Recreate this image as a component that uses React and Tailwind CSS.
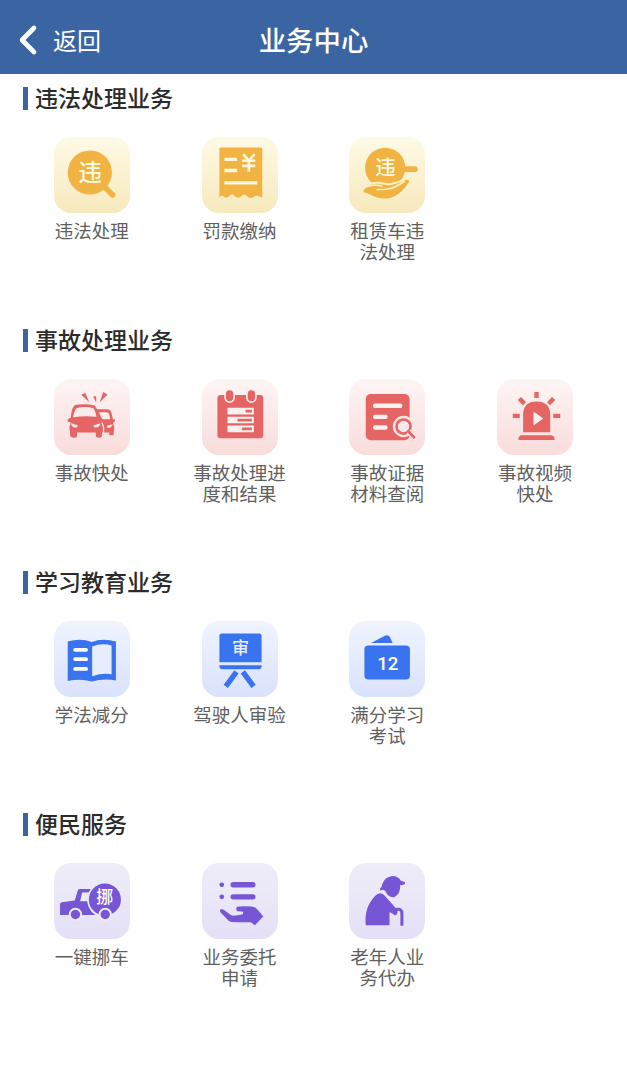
import { ChevronLeft } from 'lucide-react'

const glyph = { fontFamily: '"Noto Sans CJK SC", sans-serif', fontWeight: 500, textAnchor: 'middle' }

const ViolationIcon = () => (
  <svg viewBox="28 20 227 227" className="w-full h-full">
    <path d="M180 170 L203 193" stroke="#f1b442" strokeWidth="17" strokeLinecap="round" />
    <circle cx="135" cy="126" r="66" fill="#f1b442" />
    <text x="136" y="150" fontSize="70" fill="#fff8de" style={glyph}>违</text>
  </svg>
)

const FineIcon = () => (
  <svg viewBox="470 20 227 227" className="w-full h-full">
    <path d="M526 51 H646 Q650 51 650 55 V200 H645 Q636 190 624 200 Q614 206 604 196 Q596 188 588 196 Q578 206 568 196 Q560 188 551 196 Q542 205 533 196 Q528 192 522 202 V55 Q522 51 526 51 Z" fill="#f1b442" />
    <path d="M537 87 H575 M537 120 H575 M537 157 H635" stroke="#fff8de" strokeWidth="10" />
    <path d="M593 71 L610 91 L627 71 M590 91 H629 M590 106 H629 M610 91 V124" stroke="#fff8de" strokeWidth="8" fill="none" />
  </svg>
)

const RentalIcon = () => (
  <svg viewBox="28 20 227 227" className="w-full h-full">
    <path d="M185 116 H225" stroke="#f1b442" strokeWidth="17" strokeLinecap="round" />
    <circle cx="136" cy="112" r="60" fill="#f1b442" />
    <path d="M68 180 Q82 155 116 157 L146 161 Q165 160 199 145 Q212 142 210 155 Q187 194 152 205 Q118 211 91 195 Q80 188 70 188 Z" fill="#f1b442" stroke="#faf0c8" strokeWidth="6" />
    <path d="M112 177 L140 176 Q166 173 192 153" stroke="#faf0c8" strokeWidth="5" fill="none" strokeLinecap="round" />
    <path d="M78 169 Q98 160 126 166" stroke="#faf0c8" strokeWidth="5" fill="none" strokeLinecap="round" />
    <text x="137" y="133" fontSize="61" fill="#fff8de" style={glyph}>违</text>
  </svg>
)

const CrashIcon = () => (
  <svg viewBox="28 27 227 227" className="w-full h-full">
    <g fill="#e46563">
      <path d="M109 74 L122 69 L133 96 Z M145 80 L154 78 L154 97 Z M175 66 L188 73 L164 97 Z" />
      <path d="M152 117 H187 Q197 117 200 129 L204 147 H210 V155 L204 158 L208 171 L206 195 H193 V187 H165 V150 Z" />
    </g>
    <path d="M162 126 H185 Q191 126 193 133 L196 147 H172 Z M186 167 L203 162 Q201 173 188 173 Z" fill="#fcebeb" />
    <path d="M90 105 Q121 99 149 106 Q159 115 164 143 L173 146 V154 L167 157 L172 171 L171 199 Q162 206 153 199 V187 H97 V199 Q88 206 77 199 L74 171 L78 157 L69 154 V147 L78 143 Q80 114 90 105 Z" fill="#e46563" />
    <path d="M171 157 L176 171 V200" stroke="#fcebeb" strokeWidth="4" fill="none" />
    <path d="M95 114 Q121 108 146 114 Q153 125 155 140 Q121 136 85 141 Q88 122 95 114 Z M79 159 L98 165 Q102 172 89 172 Q80 170 79 159 Z M166 159 L147 165 Q142 172 156 172 Q165 170 166 159 Z" fill="#fcebeb" />
  </svg>
)

const ProgressIcon = () => (
  <svg viewBox="470 27 227 227" className="w-full h-full">
    <rect x="516" y="75" width="137" height="129" rx="9" fill="#e46563" />
    <g fill="#e46563" stroke="#fdeeee" strokeWidth="5">
      <rect x="539" y="58" width="27" height="38" rx="13.5" />
      <rect x="604" y="58" width="27" height="38" rx="13.5" />
    </g>
    <path d="M546 113 H625 V133 H546 Z M546 140 H625 V159 H546 Z M546 166 H625 V186 H546 Z" fill="#fdf0f0" />
    <path d="M600 123 H619 M576 150 H619 M589 176 H619" stroke="#e46563" strokeWidth="8" />
  </svg>
)

const EvidenceIcon = () => (
  <svg viewBox="28 27 227 227" className="w-full h-full">
    <rect x="78" y="72" width="131" height="138" rx="15" fill="#e46563" />
    <path d="M106 107 H181 M106 140 H137 M106 172 H137" stroke="#fdf0f0" strokeWidth="13" strokeLinecap="round" />
    <circle cx="191" cy="169" r="32" fill="#fce8e8" />
    <circle cx="191" cy="169" r="21" fill="none" stroke="#e46563" strokeWidth="8" />
    <path d="M206 184 L223 202" stroke="#fce8e8" strokeWidth="17" />
    <path d="M205 183 L222 201" stroke="#e46563" strokeWidth="8" strokeLinecap="round" />
  </svg>
)

const AlarmIcon = () => (
  <svg viewBox="470 27 227 227" className="w-full h-full">
    <path d="M588 66 V84 M537 85 L552 101 M639 85 L624 101 M517 137 H538 M638 137 H659" stroke="#e46563" strokeWidth="13" />
    <path d="M548 186 V134 Q548 94 588 94 Q629 94 629 134 V186 Z" fill="#e46563" />
    <path d="M581 128 L605 145 L581 162 Z" fill="#fdf0f0" stroke="#fdf0f0" strokeWidth="4" strokeLinejoin="round" />
    <path d="M534 209 Q534 195 544 195 H632 Q642 196 642 209 Z" fill="#e46563" />
  </svg>
)

const BookIcon = () => (
  <svg viewBox="28 32 227 227" className="w-full h-full">
    <path d="M69 93 Q108 82 141 95 Q172 82 213 93 V210 Q178 202 141 213 Q108 203 69 211 Z" fill="#3973ef" />
    <path d="M142 108 Q171 96 200 105 V191 Q171 187 142 197 Z" fill="#e7edfc" />
    <path d="M91 118 H124 M91 146 H124 M91 175 H124" stroke="#fff" strokeWidth="11" strokeLinecap="round" />
  </svg>
)

const BoardIcon = () => (
  <svg viewBox="470 32 227 227" className="w-full h-full">
    <path d="M522 155 V76 Q522 69 529 69 H641 Q648 69 648 76 V155 Z" fill="#3973ef" />
    <path d="M522 164 H648 V169 Q648 176 641 176 H529 Q522 176 522 169 Z" fill="#3973ef" />
    <path d="M573 184 L541 227 M592 184 L624 227" stroke="#3973ef" strokeWidth="16" />
    <text x="585" y="132" fontSize="51" fill="#e9efff" style={glyph}>审</text>
  </svg>
)

const ScoreIcon = () => (
  <svg viewBox="28 32 227 227" className="w-full h-full">
    <path d="M94 98 L135 76 Q145 72 151 81 L158 98 Z" fill="#3973ef" />
    <rect x="74" y="105" width="136" height="102" rx="12" fill="#3973ef" />
    <text x="144" y="178" fontSize="56" fill="#fff" textAnchor="middle" fontFamily="Roboto, sans-serif" fontWeight="500">12</text>
  </svg>
)

const MoveCarIcon = () => (
  <svg viewBox="28 24 227 227" className="w-full h-full">
    <path d="M46 146 Q47 142 52 141 L90 136 L99 106 Q100 102 107 102 H153 V179 H46 Z" fill="#7656d5" />
    <path d="M112 112 H137 L133 138 H106 Z" fill="#edeaf8" />
    <circle cx="180" cy="134" r="53" fill="#edeaf8" />
    <circle cx="180" cy="133" r="48" fill="#7656d5" />
    <g fill="#7656d5" stroke="#edeaf8" strokeWidth="6">
      <circle cx="92" cy="178" r="17" />
      <circle cx="181" cy="178" r="17" />
    </g>
    <text x="180" y="145" fontSize="51" fill="#fff" style={glyph}>挪</text>
  </svg>
)

const EntrustIcon = () => (
  <svg viewBox="25 24 227 227" className="w-full h-full">
    <g fill="#7656d5">
      <circle cx="84" cy="89" r="7" />
      <circle cx="84" cy="125" r="7" />
      <rect x="110" y="81" width="75" height="16" rx="8" />
      <rect x="110" y="117" width="75" height="16" rx="8" />
      <path d="M80 163 Q86 160 93 166 L111 179 Q116 182 125 181 L145 178 Q151 173 145 169 L131 168 Q124 162 130 155 Q137 152 173 154 L184 157 Q193 164 208 184 L183 210 L171 201 Q142 202 113 200 Q103 198 98 190 L80 171 Q77 166 80 163 Z" />
    </g>
  </svg>
)

const ElderIcon = () => (
  <svg viewBox="28 24 227 227" className="w-full h-full">
    <g fill="#7656d5">
      <path d="M121 106 Q118 101 125 96 Q130 70 149 65 Q159 60 170 65 Q180 69 183 77 L195 81 V87 Q189 91 181 90 Q182 118 163 126 Q145 128 136 107 L129 104 Z" />
      <path d="M78 210 Q72 158 105 123 Q119 108 132 119 L169 160 Q176 165 171 177 Q166 184 160 176 L149 170 V210 Z" />
    </g>
    <path d="M168 163 Q186 158 186 175 V207" stroke="#7656d5" strokeWidth="9" fill="none" strokeLinecap="square" />
  </svg>
)

const sections = [
  {
    title: '违法处理业务',
    tile: 'from-[#fefae5] to-[#f7e9bd]',
    items: [
      { lines: ['违法处理'], Icon: ViolationIcon },
      { lines: ['罚款缴纳'], Icon: FineIcon },
      { lines: ['租赁车违', '法处理'], Icon: RentalIcon },
    ],
  },
  {
    title: '事故处理业务',
    tile: 'from-[#fef5f5] to-[#f9dcdc]',
    items: [
      { lines: ['事故快处'], Icon: CrashIcon },
      { lines: ['事故处理进', '度和结果'], Icon: ProgressIcon },
      { lines: ['事故证据', '材料查阅'], Icon: EvidenceIcon },
      { lines: ['事故视频', '快处'], Icon: AlarmIcon },
    ],
  },
  {
    title: '学习教育业务',
    tile: 'from-[#eff4fe] to-[#dae2fc]',
    items: [
      { lines: ['学法减分'], Icon: BookIcon },
      { lines: ['驾驶人审验'], Icon: BoardIcon },
      { lines: ['满分学习', '考试'], Icon: ScoreIcon },
    ],
  },
  {
    title: '便民服务',
    tile: 'from-[#efedf9] to-[#e5e0f7]',
    items: [
      { lines: ['一键挪车'], Icon: MoveCarIcon },
      { lines: ['业务委托', '申请'], Icon: EntrustIcon },
      { lines: ['老年人业', '务代办'], Icon: ElderIcon },
    ],
  },
]

export default function App() {
  return (
    <div className="min-h-screen bg-white font-['Noto_Sans_CJK_SC',sans-serif]">
      <header className="h-[74px] bg-[#3b65a2] text-white grid grid-cols-3 items-center pt-1.5">
        <button className="flex items-center pl-1 text-left">
          <ChevronLeft className="w-12 h-12" strokeWidth={2.3} />
          <span className="ml-px text-2xl font-normal">返回</span>
        </button>
        <h1 className="text-center text-[27.4px] font-medium whitespace-nowrap">业务中心</h1>
      </header>

      <main>
        {sections.map(({ title, tile, items }) => (
          <section key={title} className="h-[242px] pt-[11px]">
            <div className="flex items-center gap-[7px] h-[26px] pl-[23px]">
              <span className="w-[5px] h-[23px] bg-[#3b65a2]" />
              <h2 className="text-[23px] leading-[24px] pb-0.5 font-medium text-[#2b2b2b]">{title}</h2>
            </div>
            <div className="grid grid-cols-4 px-[18px] mt-[26px]">
              {items.map(({ lines, Icon }) => (
                <div key={lines[0]} className="flex flex-col items-center">
                  <div className={`w-[76px] h-[76px] rounded-[17px] bg-linear-to-b ${tile}`}>
                    <Icon />
                  </div>
                  <p className="mt-[7px] text-center text-[18.5px] leading-[21px] text-[#5f5f5f]">
                    {lines.map((line) => <span key={line} className="block whitespace-nowrap">{line}</span>)}
                  </p>
                </div>
              ))}
            </div>
          </section>
        ))}
      </main>
    </div>
  )
}
